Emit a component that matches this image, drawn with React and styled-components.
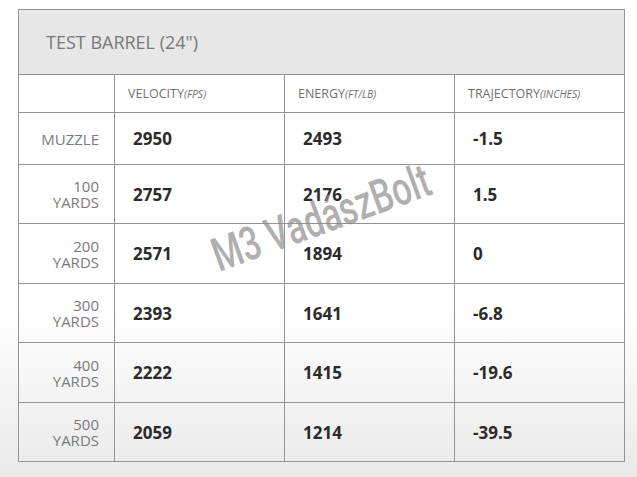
import React from "react";
import styled, { createGlobalStyle } from "styled-components";

const Global = createGlobalStyle`
  html, body { margin: 0; padding: 0; }
  body {
    min-height: 100vh;
    background: linear-gradient(to bottom, #ffffff 0px, #ffffff 310px, #e9e9e9 477px);
    font-family: "Open Sans", "Liberation Sans", sans-serif;
  }
`;

const Page = styled.div`
  padding: 9px 0 0 18px;
`;

const Wrap = styled.div`
  position: relative;
  width: 606px;
`;

const Table = styled.table`
  border-collapse: separate;
  border-spacing: 0;
  width: 606px;
  table-layout: fixed;
  border-top: 1px solid #949494;
  border-left: 1px solid #949494;
  background: transparent;
`;

const Cell = styled.td`
  box-sizing: border-box;
  border-right: 1px solid #949494;
  border-bottom: 1px solid #949494;
  padding: 0;
  vertical-align: middle;
`;

const TitleCell = styled(Cell)`
  background: #e7e7e7;
  height: 65px;
  padding-left: 27px;
  font-size: 18px;
  color: #787878;
  text-align: left;
`;

const HeadCell = styled(Cell)`
  height: 38px;
  padding-left: 13px;
  font-size: 12.5px;
  color: #707070;
  text-transform: uppercase;
  text-align: left;
  font-weight: 400;
`;

const Unit = styled.em`
  font-size: 10.5px;
  font-style: italic;
`;

const LabelCell = styled(Cell)`
  height: ${(p) => p.$h}px;
  padding-right: 15px;
  text-align: right;
  font-size: 15px;
  line-height: 16px;
  color: #7a7a7a;
  text-transform: uppercase;
`;

const ValueCell = styled(Cell)`
  padding-left: 18px;
  font-size: 17px;
  font-weight: 700;
  color: #2b2b2b;
`;

const Watermark = styled.div`
  position: absolute;
  left: 201px;
  top: 223px;
  font-family: "Roboto", "Liberation Sans", sans-serif;
  font-size: 47px;
  font-weight: 500;
  color: rgba(140, 140, 140, 0.7);
  white-space: nowrap;
  pointer-events: none;
  line-height: 1;
  transform-origin: 0 40px;
  transform: rotate(-20deg) scaleX(0.72);
`;

const rows = [
  { label: ["MUZZLE"], h: 52, v: ["2950", "2493", "-1.5"] },
  { label: ["100", "YARDS"], h: 59, v: ["2757", "2176", "1.5"] },
  { label: ["200", "YARDS"], h: 60, v: ["2571", "1894", "0"] },
  { label: ["300", "YARDS"], h: 59, v: ["2393", "1641", "-6.8"] },
  { label: ["400", "YARDS"], h: 60, v: ["2222", "1415", "-19.6"] },
  { label: ["500", "YARDS"], h: 59, v: ["2059", "1214", "-39.5"] },
];

export default function App() {
  return (
    <>
      <Global />
      <Page>
        <Wrap>
          <Table>
            <colgroup>
              <col style={{ width: 96 }} />
              <col style={{ width: 170 }} />
              <col style={{ width: 170 }} />
              <col style={{ width: 170 }} />
            </colgroup>
            <tbody>
              <tr>
                <TitleCell colSpan={4}>TEST BARREL (24")</TitleCell>
              </tr>
              <tr>
                <HeadCell as="th"></HeadCell>
                <HeadCell as="th">
                  Velocity<Unit>(FPS)</Unit>
                </HeadCell>
                <HeadCell as="th">
                  Energy<Unit>(FT/LB)</Unit>
                </HeadCell>
                <HeadCell as="th">
                  Trajectory<Unit>(Inches)</Unit>
                </HeadCell>
              </tr>
              {rows.map((r) => (
                <tr key={r.label.join(" ")}>
                  <LabelCell $h={r.h}>
                    {r.label.map((l, i) => (
                      <React.Fragment key={i}>
                        {i > 0 && <br />}
                        {l}
                      </React.Fragment>
                    ))}
                  </LabelCell>
                  {r.v.map((v, i) => (
                    <ValueCell key={i}>{v}</ValueCell>
                  ))}
                </tr>
              ))}
            </tbody>
          </Table>
          <Watermark>M3 VadászBolt</Watermark>
        </Wrap>
      </Page>
    </>
  );
}
